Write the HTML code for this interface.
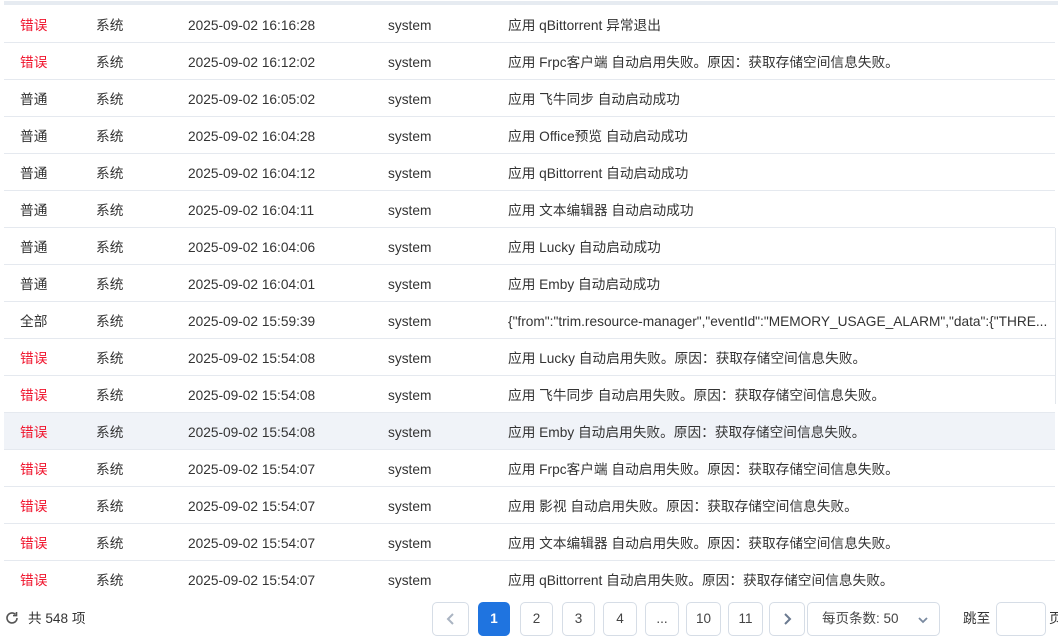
<!DOCTYPE html>
<html><head><meta charset="utf-8"><style>
*{margin:0;padding:0;box-sizing:border-box}
body{width:1058px;height:644px;overflow:hidden;background:#fff;font-family:"Liberation Sans","Noto Sans CJK SC",sans-serif;font-size:13px;color:#333;position:relative}
.top{position:absolute;left:4px;top:1px;width:1054px;height:4px;background:#e6ebf1}
.wrap{position:absolute;left:4px;top:6px;width:1051px;height:582px;overflow:hidden}
.row{position:relative;height:37px;border-bottom:1px solid #e5e9ef}
.row span{position:absolute;top:11px;white-space:nowrap;font-size:13.7px;line-height:18px;height:18px}
.hl{background:#f0f3f8}
.r{color:#f0142d}
.c1{left:16px}.c2{left:92px}.c3{left:184px}.c4{left:384px}.c5{left:504px}
.sb{position:absolute;left:1055px;top:228px;width:1px;height:176px;background:#e3e7ec}
.btn{position:absolute;top:602px;height:34px;border:1px solid #d6dde6;border-radius:5px;text-align:center;line-height:32px;color:#444;font-size:13.5px;background:#fff}
.act{background:#1f74e0;border-color:#1f74e0;color:#fff;font-weight:bold}
.t{position:absolute;top:610px;line-height:18px;font-size:13.6px}
</style></head><body>
<div class="top"></div>
<div class="wrap">
<div class="row"><span class="c1 r">错误</span><span class="c2">系统</span><span class="c3">2025-09-02 16:16:28</span><span class="c4">system</span><span class="c5">应用 qBittorrent 异常退出</span></div>
<div class="row"><span class="c1 r">错误</span><span class="c2">系统</span><span class="c3">2025-09-02 16:12:02</span><span class="c4">system</span><span class="c5">应用 Frpc客户端 自动启用失败。原因：获取存储空间信息失败。</span></div>
<div class="row"><span class="c1">普通</span><span class="c2">系统</span><span class="c3">2025-09-02 16:05:02</span><span class="c4">system</span><span class="c5">应用 飞牛同步 自动启动成功</span></div>
<div class="row"><span class="c1">普通</span><span class="c2">系统</span><span class="c3">2025-09-02 16:04:28</span><span class="c4">system</span><span class="c5">应用 Office预览 自动启动成功</span></div>
<div class="row"><span class="c1">普通</span><span class="c2">系统</span><span class="c3">2025-09-02 16:04:12</span><span class="c4">system</span><span class="c5">应用 qBittorrent 自动启动成功</span></div>
<div class="row"><span class="c1">普通</span><span class="c2">系统</span><span class="c3">2025-09-02 16:04:11</span><span class="c4">system</span><span class="c5">应用 文本编辑器 自动启动成功</span></div>
<div class="row"><span class="c1">普通</span><span class="c2">系统</span><span class="c3">2025-09-02 16:04:06</span><span class="c4">system</span><span class="c5">应用 Lucky 自动启动成功</span></div>
<div class="row"><span class="c1">普通</span><span class="c2">系统</span><span class="c3">2025-09-02 16:04:01</span><span class="c4">system</span><span class="c5">应用 Emby 自动启动成功</span></div>
<div class="row"><span class="c1">全部</span><span class="c2">系统</span><span class="c3">2025-09-02 15:59:39</span><span class="c4">system</span><span class="c5">{"from":"trim.resource-manager","eventId":"MEMORY_USAGE_ALARM","data":{"THRE...</span></div>
<div class="row"><span class="c1 r">错误</span><span class="c2">系统</span><span class="c3">2025-09-02 15:54:08</span><span class="c4">system</span><span class="c5">应用 Lucky 自动启用失败。原因：获取存储空间信息失败。</span></div>
<div class="row"><span class="c1 r">错误</span><span class="c2">系统</span><span class="c3">2025-09-02 15:54:08</span><span class="c4">system</span><span class="c5">应用 飞牛同步 自动启用失败。原因：获取存储空间信息失败。</span></div>
<div class="row hl"><span class="c1 r">错误</span><span class="c2">系统</span><span class="c3">2025-09-02 15:54:08</span><span class="c4">system</span><span class="c5">应用 Emby 自动启用失败。原因：获取存储空间信息失败。</span></div>
<div class="row"><span class="c1 r">错误</span><span class="c2">系统</span><span class="c3">2025-09-02 15:54:07</span><span class="c4">system</span><span class="c5">应用 Frpc客户端 自动启用失败。原因：获取存储空间信息失败。</span></div>
<div class="row"><span class="c1 r">错误</span><span class="c2">系统</span><span class="c3">2025-09-02 15:54:07</span><span class="c4">system</span><span class="c5">应用 影视 自动启用失败。原因：获取存储空间信息失败。</span></div>
<div class="row"><span class="c1 r">错误</span><span class="c2">系统</span><span class="c3">2025-09-02 15:54:07</span><span class="c4">system</span><span class="c5">应用 文本编辑器 自动启用失败。原因：获取存储空间信息失败。</span></div>
<div class="row"><span class="c1 r">错误</span><span class="c2">系统</span><span class="c3">2025-09-02 15:54:07</span><span class="c4">system</span><span class="c5">应用 qBittorrent 自动启用失败。原因：获取存储空间信息失败。</span></div>
</div>
<div class="sb"></div>
<svg style="position:absolute;left:5px;top:611px" width="14" height="14" viewBox="0 0 14 14"><path d="M12 7a5 5 0 1 1-1.6-3.7" fill="none" stroke="#555" stroke-width="1.6"/><path d="M11.5 1v3.6H8" fill="none" stroke="#555" stroke-width="1.6"/></svg>
<div class="t" style="left:28px">共 548 项</div>
<div class="btn" style="left:432px;width:37px"><svg width="12" height="14" viewBox="0 0 12 14" style="margin-top:9px"><path d="M8 2L3 7l5 5" fill="none" stroke="#aab4c2" stroke-width="2"/></svg></div>
<div class="btn act" style="left:478px;width:32px">1</div>
<div class="btn" style="left:520px;width:33px">2</div>
<div class="btn" style="left:562px;width:33px">3</div>
<div class="btn" style="left:603px;width:34px">4</div>
<div class="btn" style="left:645px;width:34px">...</div>
<div class="btn" style="left:686px;width:35px">10</div>
<div class="btn" style="left:728px;width:35px">11</div>
<div class="btn" style="left:769px;width:36px"><svg width="12" height="14" viewBox="0 0 12 14" style="margin-top:9px"><path d="M4 2l5 5-5 5" fill="none" stroke="#6b7a90" stroke-width="2"/></svg></div>
<div class="btn" style="left:807px;width:133px;text-align:left;padding-left:14px">每页条数: 50<svg width="12" height="10" viewBox="0 0 12 10" style="position:absolute;right:10px;top:12px"><path d="M2 3l4 4 4-4" fill="none" stroke="#7a8aa0" stroke-width="1.8"/></svg></div>
<div class="t" style="left:963px">跳至</div>
<div class="btn" style="left:996px;width:50px"></div>
<div class="t" style="left:1049px">页</div>
</body></html>
